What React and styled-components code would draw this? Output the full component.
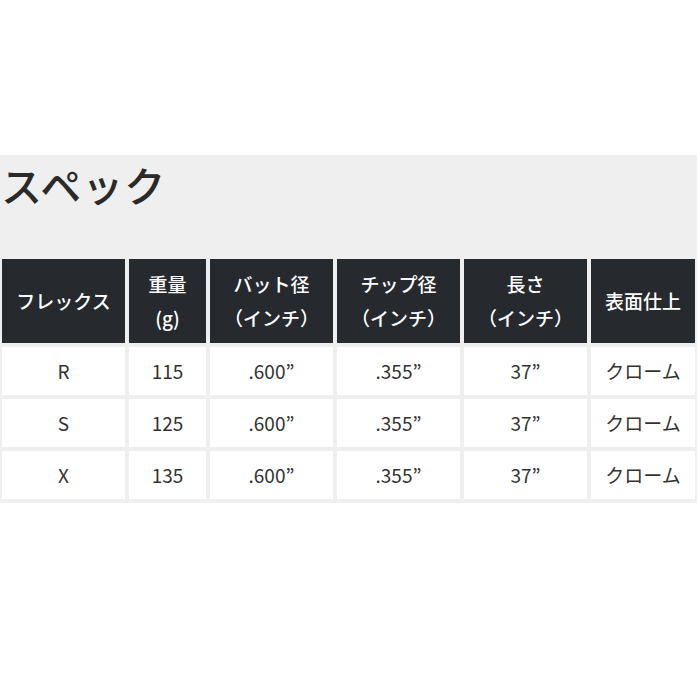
import React from "react";
import styled, { createGlobalStyle } from "styled-components";

const GlobalStyle = createGlobalStyle`
  body {
    margin: 0;
    background: #ffffff;
    font-family: "Noto Sans CJK JP", sans-serif;
  }
`;

const Page = styled.div`
  width: 700px;
  height: 700px;
  padding-top: 155px;
  box-sizing: border-box;
`;

const Panel = styled.section`
  width: 697px;
  background: #efefef;
  padding: 0 3px 4px 2px;
  box-sizing: border-box;
`;

const Title = styled.h2`
  margin: 0 0 0 -1px;
  height: 104px;
  padding-top: 2px;
  box-sizing: border-box;
  font-family: "Noto Sans CJK JP", sans-serif;
  font-size: 41px;
  font-weight: 500;
  line-height: 54px;
  letter-spacing: 1px;
  color: #2a2a2a;
`;

const Grid = styled.div`
  display: grid;
  grid-template-columns: 123px 77px 123px 123px 123px 104px;
  grid-auto-rows: 48px;
  grid-template-rows: 84px;
  column-gap: 4px;
  row-gap: 4px;
`;

const Cell = styled.div`
  display: flex;
  align-items: center;
  justify-content: center;
  text-align: center;
  background: ${p => (p.head ? "#26292d" : "#ffffff")};
  color: ${p => (p.head ? "#ffffff" : "#333333")};
  font-family: "Noto Sans CJK JP", sans-serif;
  font-size: 19px;
  font-weight: ${p => (p.head ? 500 : 400)};
  line-height: 34px;
  white-space: pre-line;
`;

const headers = [
  "フレックス",
  "重量\n(g)",
  "バット径\n（インチ）",
  "チップ径\n（インチ）",
  "長さ\n（インチ）",
  "表面仕上",
];

const rows = [
  ["R", "115", ".600”", ".355”", "37”", "クローム"],
  ["S", "125", ".600”", ".355”", "37”", "クローム"],
  ["X", "135", ".600”", ".355”", "37”", "クローム"],
];

export default function App() {
  return (
    <Page>
      <GlobalStyle />
      <Panel>
        <Title>スペック</Title>
        <Grid>
          {headers.map(h => (
            <Cell head key={h}>
              {h}
            </Cell>
          ))}
          {rows.map((r, i) =>
            r.map((v, j) => <Cell key={i + "-" + j}>{v}</Cell>)
          )}
        </Grid>
      </Panel>
    </Page>
  );
}
